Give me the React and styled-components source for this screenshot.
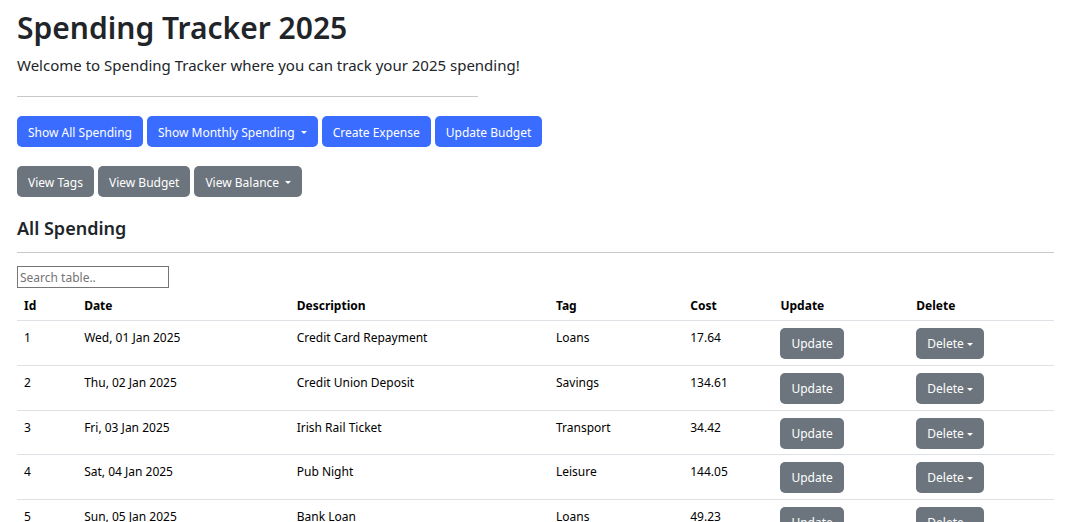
import React from "react";
import styled, { createGlobalStyle } from "styled-components";

const GlobalStyle = createGlobalStyle`
  *, *::before, *::after { box-sizing: border-box; }
  body {
    margin: 0;
    background: #fff;
    color: #212529;
    font-family: "Segoe UI", "Noto Sans", "Open Sans", sans-serif;
    font-size: 12px;
    line-height: 20px;
  }
`;

const Page = styled.main`
  padding: 8px 25px 0 17px;
`;

const Title = styled.h1`
  margin: 0 0 5px;
  font-size: 30px;
  font-weight: 600;
  line-height: 40px;
`;

const Lead = styled.p`
  margin: 0;
  font-size: 15px;
  line-height: 24px;
`;

const Rule = styled.hr`
  width: ${({ $short }) => ($short ? "461px" : "auto")};
  max-width: 100%;
  height: 1px;
  margin: ${({ $short }) => ($short ? "19px 0" : "12px 0 13px")};
  border: 0;
  background: #c7c8c9;
`;

const Toolbar = styled.div`
  display: flex;
  flex-wrap: wrap;
  gap: 4px;
  margin-bottom: 19px;
`;

const Button = styled.button`
  display: inline-flex;
  align-items: center;
  justify-content: center;
  height: 31px;
  padding: 2px 11px 0;
  border: 0;
  border-radius: 5px;
  background: ${({ $primary }) => ($primary ? "#3a6cff" : "#6c757d")};
  color: #fff;
  font: inherit;
  white-space: nowrap;
  cursor: pointer;
`;

const Caret = styled.span`
  margin-left: ${({ $tight }) => ($tight ? "3px" : "6px")};
  border: 3px solid transparent;
  border-top-color: currentColor;
  border-bottom: 0;
`;

const SectionTitle = styled.h2`
  margin: 0;
  font-size: 18px;
  font-weight: 600;
  line-height: 24px;
`;

const Search = styled.input`
  display: block;
  width: 152px;
  height: 22px;
  padding: 1px 2px;
  border: 1px solid #767676;
  border-radius: 0;
  background: #fff;
  color: #000;
  font: inherit;

  &::placeholder { color: #757575; }
`;

const Table = styled.table`
  width: 100%;
  table-layout: fixed;
  border-collapse: collapse;
  color: #000;
`;

const Column = styled.col`
  width: ${({ $share }) => $share}%;
`;

const HeadCell = styled.th`
  height: 32px;
  padding: 8px 7px 3px;
  border-bottom: 1px solid #dee2e6;
  font-weight: 700;
  text-align: left;
`;

const Row = styled.tr`
  height: 45px;

  &:nth-child(3n) { height: 44px; }
`;

const Cell = styled.td`
  padding: 7px 7px 5px;
  border-bottom: 1px solid #dee2e6;
  vertical-align: top;
`;

const ActionCell = styled(Cell)`
  line-height: 0;

  ${Button} { line-height: 20px; }
`;

const columns = [
  ["Id", 5.8],
  ["Date", 20.5],
  ["Description", 25],
  ["Tag", 12.95],
  ["Cost", 8.7],
  ["Update", 13.1],
  ["Delete", 13.95],
];

const expenses = [
  [1, "Wed, 01 Jan 2025", "Credit Card Repayment", "Loans", "17.64"],
  [2, "Thu, 02 Jan 2025", "Credit Union Deposit", "Savings", "134.61"],
  [3, "Fri, 03 Jan 2025", "Irish Rail Ticket", "Transport", "34.42"],
  [4, "Sat, 04 Jan 2025", "Pub Night", "Leisure", "144.05"],
  [5, "Sun, 05 Jan 2025", "Bank Loan", "Loans", "49.23"],
];

export default function App() {
  return (
    <>
      <GlobalStyle />
      <Page>
        <Title>Spending Tracker 2025</Title>
        <Lead>Welcome to Spending Tracker where you can track your 2025 spending!</Lead>
        <Rule $short />
        <Toolbar>
          <Button $primary>Show All Spending</Button>
          <Button $primary>Show Monthly Spending <Caret /></Button>
          <Button $primary>Create Expense</Button>
          <Button $primary>Update Budget</Button>
        </Toolbar>
        <Toolbar>
          <Button>View Tags</Button>
          <Button>View Budget</Button>
          <Button>View Balance <Caret /></Button>
        </Toolbar>
        <SectionTitle>All Spending</SectionTitle>
        <Rule />
        <Search type="text" placeholder="Search table.." aria-label="Search table" />
        <Table>
          <colgroup>
            {columns.map(([name, share]) => <Column key={name} $share={share} />)}
          </colgroup>
          <thead>
            <tr>{columns.map(([name]) => <HeadCell key={name} scope="col">{name}</HeadCell>)}</tr>
          </thead>
          <tbody>
            {expenses.map((expense) => (
              <Row key={expense[0]}>
                {expense.map((value, i) => <Cell key={i}>{value}</Cell>)}
                <ActionCell><Button>Update</Button></ActionCell>
                <ActionCell><Button>Delete <Caret $tight /></Button></ActionCell>
              </Row>
            ))}
          </tbody>
        </Table>
      </Page>
    </>
  );
}
